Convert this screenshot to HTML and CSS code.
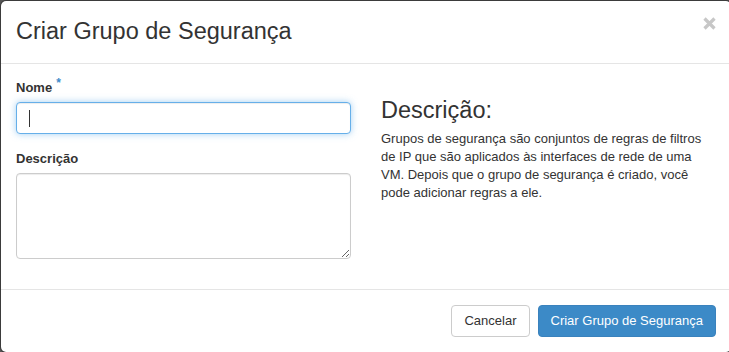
FILE: index.html
```html
<!DOCTYPE html>
<html lang="pt">
<head>
<meta charset="utf-8">
<title>Criar Grupo de Segurança</title>
<link rel="stylesheet" href="styles.css">
</head>
<body>
<div class="modal">
  <div class="modal-header">
    <h4 class="modal-title">Criar Grupo de Segurança</h4>
    <span class="close" aria-label="Fechar">
      <svg width="13" height="13" viewBox="0 0 13 13"><path d="M1.5 1.5 L11.5 11.5 M11.5 1.5 L1.5 11.5" stroke="#c7c7c7" stroke-width="3.2" stroke-linecap="butt"/></svg>
    </span>
  </div>
  <div class="modal-body">
    <div class="col">
      <div class="form-group">
        <label class="label">Nome<span class="req">*</span></label>
        <div class="input focused"><span class="caret"></span></div>
      </div>
      <div class="form-group">
        <label class="label">Descrição</label>
        <textarea class="textarea"></textarea>
      </div>
    </div>
    <div class="col">
      <h3 class="help-title">Descrição:</h3>
      <p class="help-text">Grupos de segurança são conjuntos de regras de filtros de IP que são aplicados às interfaces de rede de uma VM. Depois que o grupo de segurança é criado, você pode adicionar regras a ele.</p>
    </div>
  </div>
  <div class="modal-footer">
    <button class="btn btn-default">Cancelar</button>
    <button class="btn btn-primary">Criar Grupo de Segurança</button>
  </div>
</div>
</body>
</html>
```
FILE: styles.css
```css
* { box-sizing: border-box; }
html, body {
  margin: 0;
  padding: 0;
  background: #555555;
  overflow: hidden;
}
body {
  font-family: "Liberation Sans", Arial, sans-serif;
  color: #333333;
  font-size: 13px;
  line-height: 18px;
}
.modal {
  width: 732px;
  background: #ffffff;
  border: 1px solid rgba(0,0,0,0.3);
  border-radius: 6px;
  background-clip: padding-box;
}
.modal-header {
  display: flex;
  justify-content: space-between;
  align-items: flex-start;
  padding: 14px 15px 16px;
  border-bottom: 1px solid #e5e5e5;
}
.modal-title {
  margin: 0;
  font-size: 23.5px;
  font-weight: 400;
  line-height: 32px;
  color: #333333;
}
.close {
  display: block;
  width: 13px;
  height: 13px;
  margin-top: 2px;
}
.close svg { display: block; }
.modal-body {
  display: grid;
  grid-template-columns: 1fr 1fr;
  column-gap: 30px;
  padding: 15px;
}
.form-group { margin-bottom: 16px; }
.form-group:last-child { margin-bottom: 15px; }
.label {
  display: block;
  font-weight: 700;
  font-size: 13px;
  line-height: 18px;
  margin-bottom: 5px;
}
.req {
  color: #428bca;
  font-size: 12px;
  margin-left: 4px;
  vertical-align: 5px;
  line-height: 0;
}
.input {
  display: flex;
  align-items: center;
  height: 32px;
  padding: 0 12px;
  border: 1px solid #66afe9;
  border-radius: 4px;
  box-shadow: inset 0 1px 1px rgba(0,0,0,0.075), 0 0 7px rgba(102,175,233,0.6);
  background: #fff;
}
.caret {
  display: block;
  width: 1px;
  height: 17px;
  background: #333;
}
.textarea {
  display: block;
  width: 100%;
  height: 86px;
  margin: 0;
  padding: 6px 12px;
  border: 1px solid #cccccc;
  border-radius: 4px;
  box-shadow: inset 0 1px 1px rgba(0,0,0,0.075);
  font-family: inherit;
  font-size: 13px;
  resize: vertical;
  background: #fff;
}
.help-title {
  margin: 18px 0 7px;
  font-size: 23.5px;
  font-weight: 400;
  line-height: 26px;
  color: #333;
}
.help-text {
  margin: 0;
  font-size: 13px;
  line-height: 18px;
}
.modal-footer {
  display: flex;
  justify-content: flex-end;
  gap: 8px;
  padding: 15px;
  border-top: 1px solid #e5e5e5;
}
.btn {
  height: 32px;
  padding: 0 12px;
  font-family: inherit;
  font-size: 13px;
  line-height: 30px;
  border-radius: 4px;
  border: 1px solid transparent;
  cursor: pointer;
}
.btn-default {
  background: #fff;
  border-color: #cccccc;
  color: #333;
}
.btn-primary {
  background: #3c8ac7;
  border-color: #3a82bd;
  color: #fff;
}
```
